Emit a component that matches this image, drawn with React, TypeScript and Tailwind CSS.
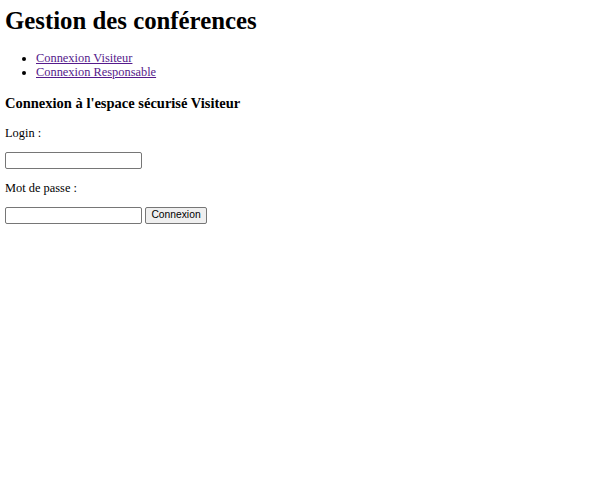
export default function App() {
  return (
    <div className="min-h-screen bg-white pl-[5px] text-black font-['Liberation_Serif','Times_New_Roman',serif]">
      <h1 className="mt-[7px] text-[24.8px] font-bold leading-[28px]">Gestion des conférences</h1>

      <ul className="mt-[16px] list-disc pl-[31px] text-[12.4px] leading-[14px]">
        <li>
          <a href="#" className="text-[#551a8b] underline">Connexion Visiteur</a>
        </li>
        <li>
          <a href="#" className="text-[#551a8b] underline">Connexion Responsable</a>
        </li>
      </ul>

      <h3 className="mt-[16px] text-[14.5px] font-bold leading-[17px]">Connexion à l'espace sécurisé Visiteur</h3>

      <form className="text-[12.4px] leading-[14px]">
        <p className="mt-[14px]">Login :</p>
        <div className="mt-[12px] flex items-center">
          <input type="text" className="h-[17px] w-[137px] rounded-[2px] border border-[#767676] bg-white" />
        </div>
        <p className="mt-[12px]">Mot de passe :</p>
        <div className="mt-[12px] flex items-center gap-[3px]">
          <input type="password" className="h-[17px] w-[137px] rounded-[2px] border border-[#767676] bg-white" />
          <button
            type="button"
            className="h-[17px] w-[62px] rounded-[2px] border border-[#767676] bg-[#efefef] font-['Liberation_Sans',Arial,sans-serif] text-[10.3px] leading-none"
          >
            Connexion
          </button>
        </div>
      </form>
    </div>
  );
}
